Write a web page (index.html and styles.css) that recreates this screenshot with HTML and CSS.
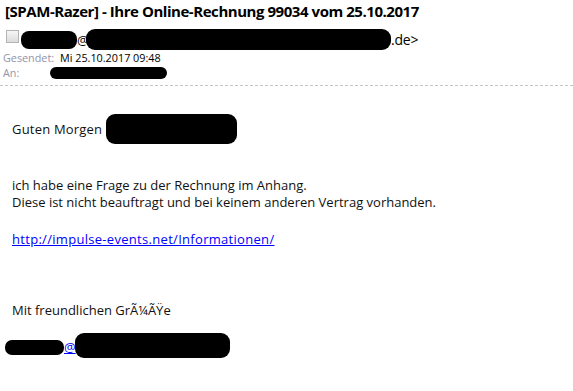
FILE: index.html
```html
<!DOCTYPE html>
<html lang="de">

<head>
  <meta charset="UTF-8" />
  <title>[SPAM-Razer] - Ihre Online-Rechnung 99034 vom 25.10.2017</title>
  <link rel="stylesheet" href="styles.css">
</head>

<body>
  <!-- Kopfbereich der Nachricht -->
  <div class="header">
    <h1 class="subject">[SPAM-Razer] - Ihre Online-Rechnung 99034 vom 25.10.2017</h1>
    <div class="from">
      <span class="check"></span>
      <span class="blob blob-from-name"></span>
      <span class="at">@</span>
      <span class="blob blob-from-domain"></span>
      <span class="tld">.de&gt;</span>
    </div>
    <div class="meta">
      <span class="label">Gesendet:</span>
      <span class="value">Mi 25.10.2017 09:48</span>
    </div>
    <div class="meta">
      <span class="label">An:</span>
      <span class="blob blob-to"></span>
    </div>
  </div>

  <div class="divider"></div>

  <!-- Nachrichtentext -->
  <div class="message">
    <div class="greeting">Guten Morgen <span class="blob blob-greet"></span></div>
    <p class="para">ich habe eine Frage zu der Rechnung im Anhang.<br>Diese ist nicht beauftragt und bei keinem anderen Vertrag vorhanden.</p>
    <p class="para link-line"><a href="#">http://impulse-events.net/Informationen/</a></p>
    <p class="para closing">Mit freundlichen GrÃ¼ÃŸe</p>
    <div class="signature">
      <span class="blob blob-sig-name"></span><a href="#" class="sig-at">@</a><span class="blob blob-sig-domain"></span>
    </div>
  </div>
</body>

</html>
```

FILE: styles.css
```css
* {
  box-sizing: border-box;
}
body {
  margin: 0;
  background: #fff;
  color: #000;
  font-family: 'Open Sans', 'Liberation Sans', sans-serif;
  width: 573px;
  height: 391px;
  overflow: hidden;
}
.subject {
  margin: 0;
  padding-left: 5px;
  font-size: 15px;
  font-weight: bold;
  letter-spacing: -0.45px;
  line-height: 22px;
  height: 22px;
  color: #000;
}
.from {
  display: flex;
  align-items: center;
  height: 21px;
  margin-top: 7px;
  padding-left: 6px;
  font-size: 14px;
}
.check {
  width: 13px;
  height: 13px;
  border: 1px solid #b4b4b4;
  background: linear-gradient(#f6f6f6, #dcdcdc);
  margin-right: 2px;
  align-self: flex-start;
  margin-top: 1px;
}
.blob {
  display: inline-block;
  background: #000;
  border-radius: 8px;
}
.blob-from-name {
  width: 56px;
  height: 18px;
}
.blob-from-domain {
  width: 305px;
  height: 21px;
  border-radius: 9px;
}
.at {
  width: 9px;
  font-size: 13px;
}
.tld {
  font-size: 14px;
  letter-spacing: -0.2px;
}
.meta {
  display: flex;
  align-items: center;
  height: 15px;
  padding-left: 3px;
  font-size: 10.8px;
}
.meta:first-of-type {
  margin-top: 1px;
}
.label {
  width: 57px;
  color: #9393ab;
}
.value {
  color: #000;
}
.blob-to {
  width: 117px;
  height: 12px;
  margin-left: -10px;
  border-radius: 6px;
}
.divider {
  margin-top: 5px;
  border-top: 1px dashed #c4c4c4;
}
.message {
  padding-left: 12px;
  font-size: 13px;
  line-height: 17px;
  color: #111;
}
.greeting {
  display: flex;
  align-items: center;
  height: 30px;
  margin-top: 28px;
  letter-spacing: 0.2px;
}
.blob-greet {
  width: 131px;
  height: 30px;
  margin-left: 4px;
  border-radius: 9px;
}
.para {
  margin: 33px 0 0;
}
.link-line {
  margin-top: 20px;
}
.link-line a {
  letter-spacing: 0.3px;
}
.link-line a,
.sig-at {
  color: #0000ff;
  text-decoration: underline;
}
.closing {
  margin-top: 54px;
}
.signature {
  display: flex;
  align-items: center;
  height: 25px;
  margin-top: 14px;
  margin-left: -7px;
}
.blob-sig-name {
  width: 59px;
  height: 15px;
  margin-top: 4px;
  border-radius: 7px;
}
.sig-at {
  width: 11px;
  margin-top: 4px;
}
.blob-sig-domain {
  width: 155px;
  height: 25px;
  border-radius: 9px;
}
```
